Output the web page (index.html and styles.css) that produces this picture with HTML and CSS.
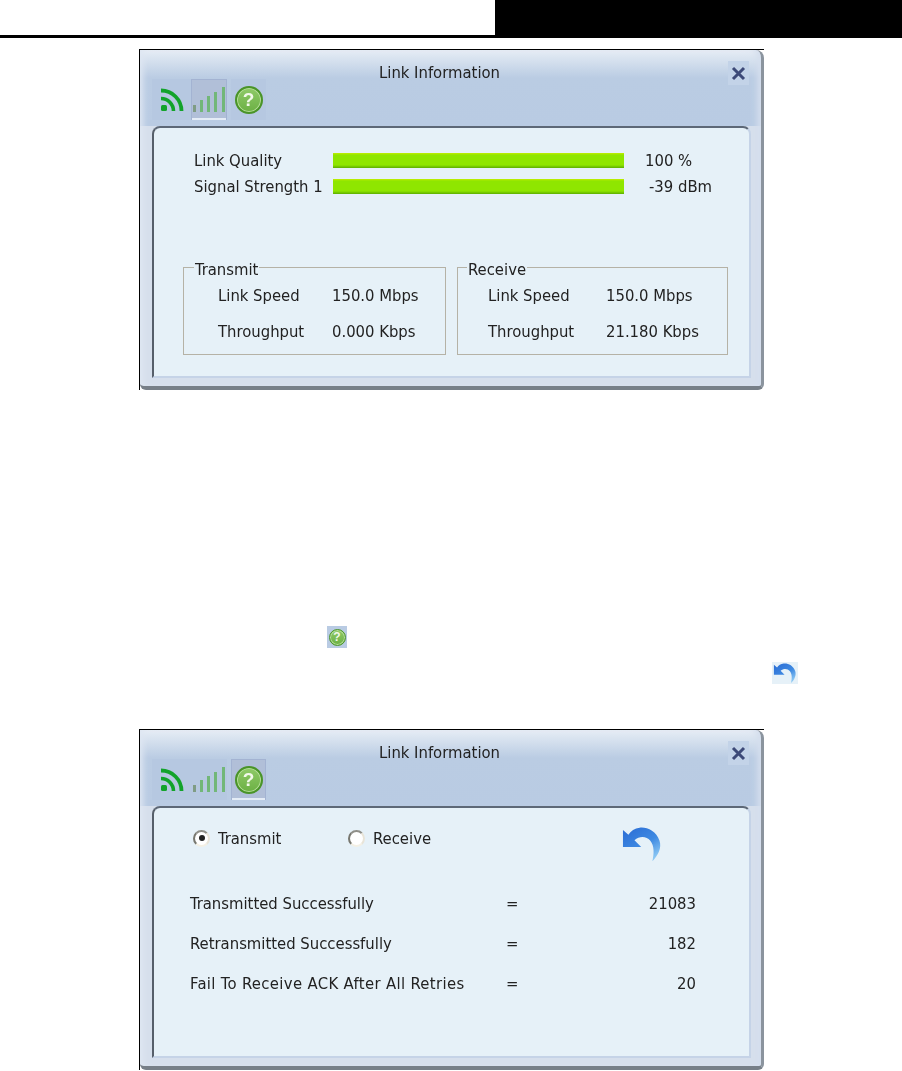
FILE: index.html
```html
<!DOCTYPE html>
<html lang="en">
  <head>
    <meta charset="UTF-8" />
    <title>Link Information</title>
    <link rel="stylesheet" href="styles.css">
  </head>
  <body>
    <!-- Shared icons -->
    <svg class="icon-defs" width="0" height="0">
      <defs>
        <linearGradient id="undoFill" x1="0" y1="0" x2="0.7" y2="1">
          <stop offset="0" stop-color="#2a6bd4" />
          <stop offset="0.6" stop-color="#3f8ae2" />
          <stop offset="1" stop-color="#8cc8f4" />
        </linearGradient>
      </defs>
      <symbol id="wifi" viewBox="0 0 24 24">
        <rect x="1" y="17" width="6" height="6" rx="1.500" fill="#12a32a" />
        <path d="M1 10.500a12.500 12.500 0 0 1 12.500 12.500" fill="none" stroke="#12a32a" stroke-width="3.600" />
        <path d="M1 2.500a20.500 20.500 0 0 1 20.500 20.500" fill="none" stroke="#12a32a" stroke-width="3.800" />
      </symbol>
      <symbol id="signal" viewBox="0 0 34 26">
        <rect x="1" y="18" width="3" height="7" fill="#7f9c84" />
        <rect x="8" y="13" width="3" height="12" fill="#72b778" />
        <rect x="15" y="9" width="3" height="16" fill="#72b778" />
        <rect x="22" y="5" width="3" height="20" fill="#72b778" />
        <rect x="30" y="0" width="3" height="25" fill="#72b778" />
      </symbol>
      <symbol id="undo" viewBox="185 310 125 118">
        <path fill="url(#undoFill)" d="M188 325 L188 378 L245 378 L224 357 C240 343 262 345 273 358 C287 375 285 400 280 423 C298 405 310 380 302 358 C292 328 262 315 240 318 C225 320 212 328 205 340 Z" />
      </symbol>
    </svg>

    <header class="page-head">
      <div class="page-head-left"></div>
      <div class="page-head-right"></div>
    </header>

    <!-- Link information -->
    <section class="window window-first">
      <div class="frame">
        <div class="titlebar">
          <span class="title">Link Information</span>
          <span class="close">
            <svg width="15" height="15" viewBox="0 0 15 15"><path d="M2 2L13 13M13 2L2 13" stroke="#3d4a78" stroke-width="3" /></svg>
          </span>
        </div>
        <div class="toolbar">
          <span class="tool tool-wifi"><svg width="24" height="24"><use href="#wifi" /></svg></span>
          <span class="tool tool-signal is-active"><svg width="34" height="26"><use href="#signal" /></svg></span>
          <span class="tool tool-help"><span class="help-icon">?</span></span>
        </div>
        <div class="panel">
          <div class="meters">
            <span>Link Quality</span>
            <div class="bar"></div>
            <span class="value">100 %</span>
            <span>Signal Strength 1</span>
            <div class="bar"></div>
            <span class="value value-dbm">-39 dBm</span>
          </div>
          <div class="groups">
            <fieldset class="group group-tx">
              <legend>Transmit</legend>
              <div class="stats stats-tx">
                <span>Link Speed</span><span>150.0 Mbps</span>
                <span>Throughput</span><span>0.000 Kbps</span>
              </div>
            </fieldset>
            <fieldset class="group group-rx">
              <legend>Receive</legend>
              <div class="stats stats-rx">
                <span>Link Speed</span><span>150.0 Mbps</span>
                <span>Throughput</span><span>21.180 Kbps</span>
              </div>
            </fieldset>
          </div>
        </div>
      </div>
    </section>

    <!-- Inline icons of the text between the windows -->
    <section class="notes">
      <span class="note-icon note-help"><span class="help-icon help-icon-small">?</span></span>
      <span class="note-icon note-undo"><svg width="24" height="22"><use href="#undo" /></svg></span>
    </section>

    <!-- Statistics -->
    <section class="window">
      <div class="frame">
        <div class="titlebar">
          <span class="title">Link Information</span>
          <span class="close">
            <svg width="15" height="15" viewBox="0 0 15 15"><path d="M2 2L13 13M13 2L2 13" stroke="#3d4a78" stroke-width="3" /></svg>
          </span>
        </div>
        <div class="toolbar">
          <span class="tool tool-wifi"><svg width="24" height="24"><use href="#wifi" /></svg></span>
          <span class="tool tool-signal"><svg width="34" height="26"><use href="#signal" /></svg></span>
          <span class="tool tool-help is-active"><span class="help-icon">?</span></span>
        </div>
        <div class="panel">
          <div class="radios">
            <span class="radio is-on"></span>
            <span class="radio-label">Transmit</span>
            <span class="radio radio-rx"></span>
            <span class="radio-label">Receive</span>
            <svg class="undo-big" width="40" height="38"><use href="#undo" /></svg>
          </div>
          <div class="counters">
            <span>Transmitted Successfully</span><span>=</span><span class="count">21083</span>
            <span>Retransmitted Successfully</span><span>=</span><span class="count">182</span>
            <span class="counter-long">Fail To Receive ACK After All Retries</span><span>=</span><span class="count">20</span>
          </div>
        </div>
      </div>
    </section>
  </body>
</html>
```

FILE: styles.css
```css
* {
  margin: 0;
  padding: 0;
  box-sizing: border-box;
}

body {
  font-family: "DejaVu Sans Condensed", "DejaVu Sans", sans-serif;
  font-size: 16.5px;
  color: #222;
  background: #fff;
  overflow: hidden;
}

.icon-defs {
  position: absolute;
}

/* Green round help icon */
.help-icon {
  display: flex;
  align-items: center;
  justify-content: center;
  width: 28px;
  height: 28px;
  border: 2px solid #4a9428;
  border-radius: 50%;
  background: linear-gradient(#8fca68, #6cb044);
  box-shadow: inset 0 0 0 1px #b5dd98;
  font-family: "Liberation Sans", sans-serif;
  font-size: 19px;
  font-weight: bold;
  color: #f2f8ea;
}

.help-icon-small {
  width: 17px;
  height: 17px;
  border-width: 1px;
  font-size: 12px;
}

/* Page header */
.page-head {
  display: flex;
  height: 38px;
}

.page-head-left {
  width: 495px;
  border-bottom: 3px solid #000;
}

.page-head-right {
  flex: 1;
  background: #000;
}

/* Window */
.window {
  width: 625px;
  margin-left: 139px;
  border-top: 1px solid #000;
  border-left: 1px solid #000;
  filter: blur(0.5px);
}

.window-first {
  margin-top: 11px;
}

.frame {
  height: 340px;
  padding: 11px 10px 0 12px;
  border-right: 3px solid #8b949e;
  border-bottom: 4px solid #777f88;
  border-radius: 0 8px 6px 6px;
  background: linear-gradient(#e6edf5 0, #bacce3 28px, #b9cbe3 76px, #d6dfec 76px);
  box-shadow: inset 6px 0 6px -3px #dfe7f2, inset -8px 0 6px -4px #d4deed;
}

.titlebar {
  display: grid;
  grid-template-columns: 1fr auto 1fr;
  align-items: center;
  height: 24px;
  margin-bottom: -6px;
}

.title {
  grid-column: 2;
  margin: 0 24px 2px 0;
}

.close {
  grid-column: 3;
  justify-self: end;
  display: flex;
  align-items: center;
  justify-content: center;
  width: 21px;
  height: 24px;
  margin-right: 2px;
  background: #c3d3e8;
}

/* Tool icons */
.toolbar {
  display: flex;
  height: 47px;
}

.tool {
  display: flex;
  align-items: center;
  justify-content: center;
  height: 41px;
  background: #b6c8e1;
}

.tool-wifi {
  width: 39px;
}

.tool-signal {
  width: 36px;
}

.tool-help {
  width: 35px;
  margin-left: 4px;
}

.tool.is-active {
  background: #b1bfd8;
  box-shadow: inset 1px 0 #a3b3d2, inset -1px 0 #a3b3d2, inset 0 1px #a3b3d2, inset 0 -2px #e4ecf6;
}

/* Panel */
.panel {
  height: 252px;
  border: 2px solid #c5d3e7;
  border-top-color: #5d6877;
  border-left-color: #565f6a;
  border-radius: 8px 8px 0 0;
  background: #e6f1f8;
}

.meters {
  display: grid;
  grid-template-columns: 139px 291px auto;
  row-gap: 11px;
  align-items: center;
  justify-content: start;
  padding: 25px 0 0 40px;
}

.meters > span {
  line-height: 15px;
}

.bar {
  height: 15px;
  background: linear-gradient(#c4ee00 0, #8fe600 2px, #8fe600 12px, #5cae00 15px);
}

.value {
  margin-left: 21px;
}

.value-dbm {
  margin-left: 25px;
}

/* Group boxes */
.groups {
  display: flex;
  gap: 11px;
  margin: 63px 0 0 29px;
}

.group {
  height: 98px;
  border: 1px solid #b5b2a6;
  padding: 0;
}

.group legend {
  margin-left: 10px;
  padding: 6px 1px 0;
  line-height: 14px;
}

.group-tx {
  width: 263px;
}

.group-rx {
  width: 271px;
}

.group-rx legend {
  margin-left: 9px;
}

.stats {
  display: grid;
  grid-template-columns: 114px auto;
  row-gap: 18px;
  line-height: 18px;
  margin-top: 10px;
}

.stats-tx {
  padding-left: 34px;
}

.stats-rx {
  grid-template-columns: 118px auto;
  padding-left: 30px;
}

/* Radio row */
.radios {
  display: flex;
  align-items: center;
  height: 40px;
  margin-top: 10px;
  padding-left: 39px;
}

.radio {
  display: flex;
  align-items: center;
  justify-content: center;
  width: 17px;
  height: 17px;
  border: 2px solid;
  border-color: #8f8f88 #e8e4d8 #f4f0e4 #77776f;
  border-radius: 50%;
  background: #fff;
}

.is-on::after {
  content: "";
  width: 6px;
  height: 6px;
  border-radius: 50%;
  background: #222;
}

.radio-label {
  width: 64px;
  margin-left: 8px;
}

.radio-rx {
  margin-left: 66px;
}

.undo-big {
  margin: 11px 0 0 185px;
}

/* Counters */
.counters {
  display: grid;
  grid-template-columns: 316px 1fr auto;
  row-gap: 22px;
  line-height: 18px;
  margin-top: 37px;
  padding: 0 53px 0 36px;
}

.counter-long {
  letter-spacing: 0.35px;
}

.count {
  text-align: right;
}

/* Text between the windows */
.notes {
  display: flex;
  flex-direction: column;
  align-items: flex-start;
  height: 339px;
  padding-top: 236px;
}

.note-icon {
  display: flex;
  align-items: center;
  justify-content: center;
}

.note-help {
  width: 20px;
  height: 22px;
  margin-left: 327px;
  background: #b9cbe3;
}

.note-undo {
  width: 26px;
  height: 22px;
  margin: 14px 0 0 772px;
  background: #e6f1f8;
}
```
